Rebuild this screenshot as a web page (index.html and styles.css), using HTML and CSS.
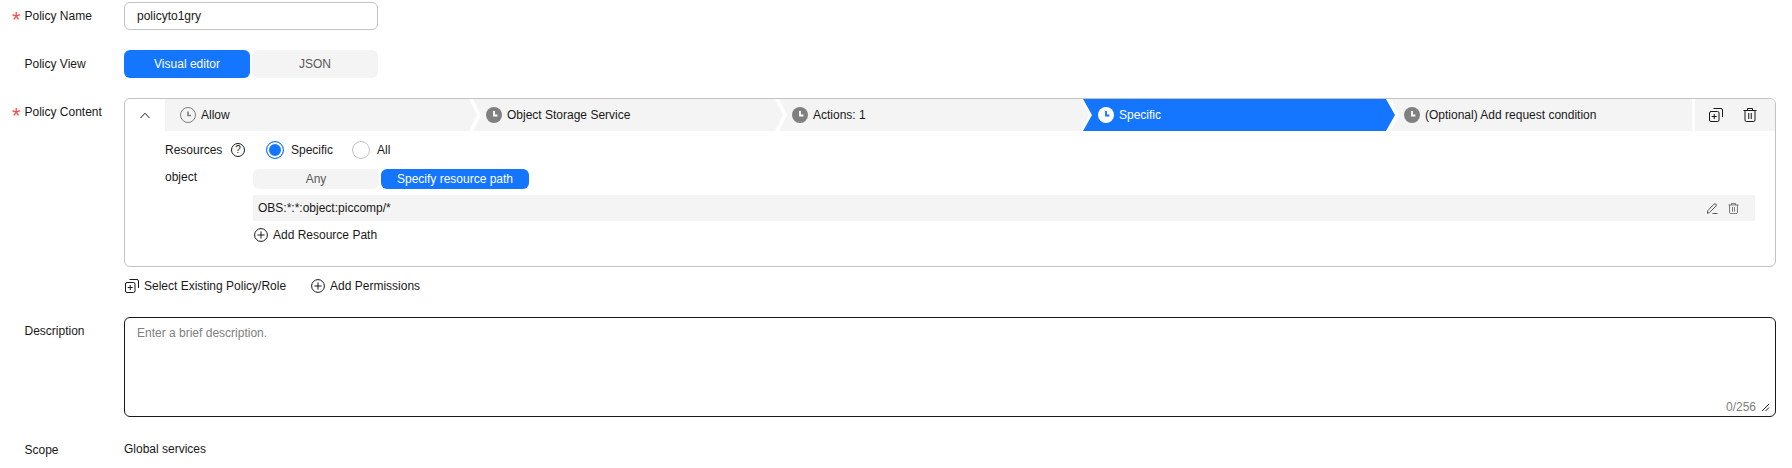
FILE: index.html
```html
<!DOCTYPE html>
<html lang="en">
<head>
<meta charset="utf-8">
<title>Policy</title>
<link rel="stylesheet" href="styles.css">
</head>
<body>
<svg class="defs" width="0" height="0" aria-hidden="true">
  <symbol id="i-clock" viewBox="0 0 16 16"><path d="M8 4v4.5h3.4" fill="none" stroke="currentColor" stroke-width="1.8"/></symbol>
  <symbol id="i-plus-circle" viewBox="0 0 14 14"><circle cx="7" cy="7" r="6.4" fill="none" stroke="currentColor"/><path d="M7 3.4v7.2M3.4 7h7.2" stroke="currentColor" fill="none"/></symbol>
  <symbol id="i-copy" viewBox="0 0 14 14"><rect x=".5" y="3.5" width="9.5" height="10" rx="1.5" fill="none" stroke="currentColor"/><path d="M5.25 6v5M2.75 8.5h5M4.5.5H12a1.5 1.5 0 0 1 1.5 1.5v7" fill="none" stroke="currentColor"/></symbol>
  <symbol id="i-trash" viewBox="0 0 14 14"><path d="M.5 2.5h13M4.5 2.5v-2h5v2M2 2.5V12a1.5 1.5 0 0 0 1.5 1.5h7a1.5 1.5 0 0 0 1.5-1.5V2.5M5.75 5v6M8.25 5v6" fill="none" stroke="currentColor"/></symbol>
</svg>

<main class="form">
  <div class="row">
    <div class="label"><span class="star">*</span>Policy Name</div>
    <div class="field"><input class="name-input" type="text" value="policyto1gry"></div>
  </div>

  <div class="row">
    <div class="label"><span class="star-gap"></span>Policy View</div>
    <div class="field toggle toggle-view">
      <span class="seg seg-on">Visual editor</span>
      <span class="seg seg-off">JSON</span>
    </div>
  </div>

  <div class="row row-content">
    <div class="label"><span class="star">*</span>Policy Content</div>
    <div class="field">
      <section class="box">
        <header class="box-head">
          <button class="collapse" type="button" aria-label="Collapse">
            <svg width="10" height="7" viewBox="0 0 10 7"><path d="M.5 6 5 1.2 9.5 6" fill="none" stroke="#191919"/></svg>
          </button>
          <ol class="steps">
            <li class="step step-first"><span class="clock clock-outline"><svg width="16" height="16"><use href="#i-clock"/></svg></span>Allow</li>
            <li class="step"><span class="clock"><svg width="16" height="16"><use href="#i-clock"/></svg></span>Object Storage Service</li>
            <li class="step"><span class="clock"><svg width="16" height="16"><use href="#i-clock"/></svg></span>Actions: 1</li>
            <li class="step step-active"><span class="clock clock-active"><svg width="16" height="16"><use href="#i-clock"/></svg></span>Specific</li>
            <li class="step step-last"><span class="clock"><svg width="16" height="16"><use href="#i-clock"/></svg></span>(Optional) Add request condition</li>
          </ol>
          <div class="head-actions">
            <svg width="14" height="14"><use href="#i-copy"/></svg>
            <svg width="14" height="14"><use href="#i-trash"/></svg>
          </div>
        </header>
        <div class="box-body">
          <div class="res-row">
            <span class="res-label">Resources</span>
            <span class="help">?</span>
            <label class="radio radio-on">Specific</label>
            <label class="radio">All</label>
          </div>
          <div class="obj-row">
            <span class="obj-label">object</span>
            <div class="obj-main">
              <div class="toggle toggle-res">
                <span class="seg seg-off seg-any">Any</span>
                <span class="seg seg-on seg-path">Specify resource path</span>
              </div>
              <div class="path-row">
                <span>OBS:*:*:object:piccomp/*</span>
                <span class="path-actions">
                  <svg width="11" height="11" viewBox="0 0 11 11"><path d="M.7 7.8 7 1.2a1.3 1.3 0 0 1 2 1.8L2.7 9.4.4 10.4ZM5.5 10.5h5" fill="none" stroke="currentColor"/></svg>
                  <svg width="11" height="11"><use href="#i-trash"/></svg>
                </span>
              </div>
              <a class="link link-path"><svg width="14" height="14"><use href="#i-plus-circle"/></svg>Add Resource Path</a>
            </div>
          </div>
        </div>
      </section>
      <div class="box-links">
        <a class="link"><svg width="14" height="14"><use href="#i-copy"/></svg>Select Existing Policy/Role</a>
        <a class="link"><svg width="14" height="14"><use href="#i-plus-circle"/></svg>Add Permissions</a>
      </div>
    </div>
  </div>

  <div class="row row-desc">
    <div class="label"><span class="star-gap"></span>Description</div>
    <div class="field">
      <div class="desc">
        <span class="placeholder">Enter a brief description.</span>
        <span class="counter">0/256</span>
        <svg class="grip" width="9" height="9" viewBox="0 0 9 9"><path d="M1 8 8 1M4.5 8 8 4.5" stroke="#191919" fill="none"/></svg>
      </div>
    </div>
  </div>

  <div class="row row-scope">
    <div class="label"><span class="star-gap"></span>Scope</div>
    <div class="field scope-value">Global services</div>
  </div>
</main>
</body>
</html>
```
FILE: styles.css
```css
* { box-sizing: border-box; }
html, body { margin: 0; padding: 0; background: #fff; }
body {
  font-family: "Liberation Sans", Arial, sans-serif;
  font-size: 12px;
  color: #191919;
  height: 468px;
  overflow: hidden;
}
.defs { position: absolute; }
.form { padding: 2px 16px 0 0; }
.row { display: grid; grid-template-columns: 124px 1fr; }
.row + .row { margin-top: 20px; }
.label { display: flex; align-items: center; height: 28px; padding-left: 12px; font-size: 12px; align-self: start; }
.star { width: 12.5px; height: 28px; align-self: flex-start; color: #f4504a; font-size: 22px; line-height: 36px; }
.star-gap { width: 12.5px; }
.field { min-width: 0; }
.name-input {
  display: block; width: 254px; height: 28px; padding: 0 12px;
  border: 1px solid #c2c2c2; border-radius: 6px;
  font: 12px "Liberation Sans", Arial, sans-serif; color: #191919; outline: none;
}
.toggle { display: flex; gap: 2px; }
.seg { display: flex; align-items: center; justify-content: center; border-radius: 6px; }
.seg-on { background: #1476ff; color: #fff; }
.seg-off { background: #f4f4f4; color: #595959; }
.toggle-view .seg { width: 126px; height: 28px; }
.box { height: 169px; border: 1px solid #c2c2c2; border-radius: 6px; overflow: hidden; }
.box-head { display: flex; height: 32px; }
.collapse { width: 40px; flex: none; border: 0; background: none; padding: 0; display: flex; align-items: center; justify-content: center; }
.steps { display: flex; flex: 1; min-width: 0; margin: 0; padding: 0; list-style: none; }
.step {
  display: flex; align-items: center; gap: 5px; flex: none; width: 312px; margin-left: -6px; padding-left: 15px;
  background: #f4f4f4;
  clip-path: polygon(2px 0, calc(100% - 8px) 0, 100% 50%, calc(100% - 8px) 100%, 2px 100%, 10px 50%);
}
.step-first { margin-left: 0; clip-path: polygon(0 0, calc(100% - 8px) 0, 100% 50%, calc(100% - 8px) 100%, 0 100%); }
.step-active {
  background: #1476ff; color: #fff;
  clip-path: polygon(0 0, calc(100% - 9px) 0, 100% 50%, calc(100% - 9px) 100%, 0 100%, 9px 50%);
}
.step-last { flex: 1; width: auto; clip-path: polygon(2px 0, 100% 0, 100% 100%, 2px 100%, 10px 50%); }
.clock {
  flex: none; width: 16px; height: 16px; border-radius: 50%; background: #808080; color: #fff; display: block;
}
.clock svg { display: block; }
.clock-outline { background: none; border: 1px solid #808080; color: #808080; }
.clock-outline svg { margin: -1px; transform: scale(.9); }
.clock-active { background: #fff; color: #1476ff; }
.head-actions { flex: none; width: 80px; margin-left: 3px; background: #f4f4f4; display: flex; align-items: center; gap: 20px; padding-left: 14px; color: #191919; }
.box-body { padding: 0 0 0 40px; }
.res-row { display: flex; align-items: center; height: 20px; margin-top: 9px; }
.res-label { width: 66px; }
.help {
  width: 14px; height: 14px; border: 1px solid #191919; border-radius: 50%;
  font-size: 10px; line-height: 12px; text-align: center; margin-right: 21px;
}
.radio { display: flex; align-items: center; gap: 7px; margin-right: 19px; }
.radio::before { content: ""; width: 16px; height: 16px; border-radius: 50%; border: 1px solid #c2c2c2; background: #fff; }
.radio-on::before { border-color: #1476ff; background: #1476ff; box-shadow: inset 0 0 0 2px #fff; }
.obj-row { display: flex; }
.obj-label { width: 88px; line-height: 16px; margin-top: 9px; flex: none; }
.obj-main { flex: 1; min-width: 0; margin-top: 9px; padding-right: 20px; }
.toggle-res .seg { height: 20px; }
.seg-any { width: 126px; }
.seg-path { width: 148px; }
.path-row {
  display: flex; align-items: center; justify-content: space-between;
  height: 26px; margin-top: 6px; padding: 0 16px 0 5px; background: #f4f4f4;
}
.path-actions { display: flex; gap: 10px; color: #595959; }
.link { display: inline-flex; align-items: center; gap: 5px; color: #191919; }
.link svg { flex: none; }
.link-path { margin: 7px 0 0 1px; }
.box-links { display: flex; gap: 25px; margin-top: 12px; padding-left: 1px; }
.row-desc { margin-top: 24px !important; }
.desc {
  position: relative; height: 100px; border: 1px solid #191919; border-radius: 6px;
  padding: 8px 12px;
}
.placeholder { color: #808080; }
.counter { position: absolute; right: 19px; bottom: 2px; color: #808080; }
.grip { position: absolute; right: 5px; bottom: 4px; }
.row-scope { margin-top: 19px !important; }
.scope-value { line-height: 26px; }
```
